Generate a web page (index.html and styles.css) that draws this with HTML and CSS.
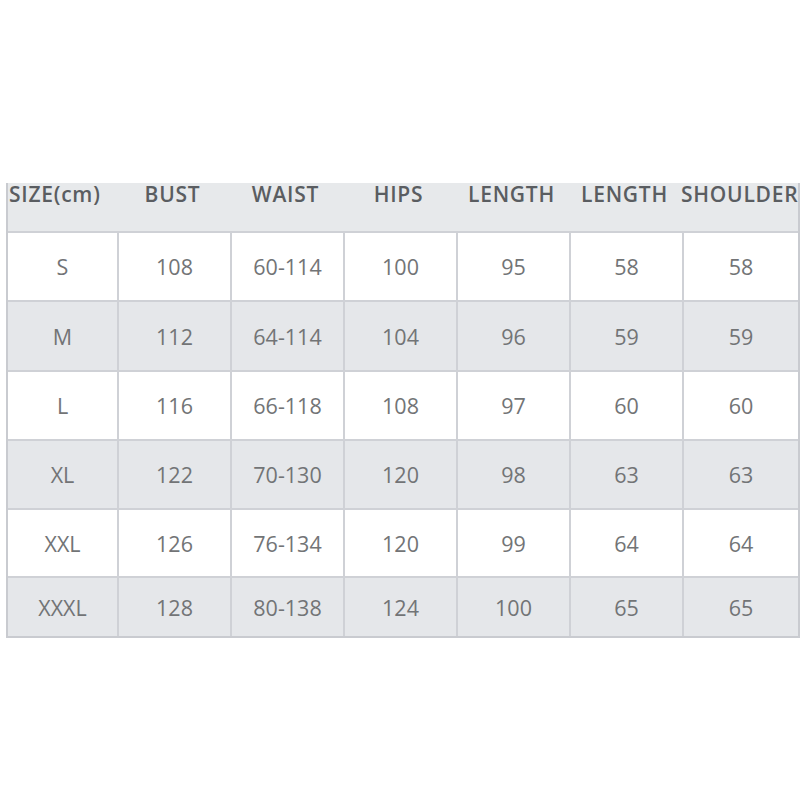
FILE: index.html
```html
<!DOCTYPE html>
<html>
<head>
<meta charset="utf-8">
<link rel="stylesheet" href="styles.css">
</head>
<body>
<div class="chart">
  <div class="head">
    <div class="hc first">SIZE(cm)</div>
    <div class="hc">BUST</div>
    <div class="hc">WAIST</div>
    <div class="hc">HIPS</div>
    <div class="hc">LENGTH</div>
    <div class="hc">LENGTH</div>
    <div class="hc last">SHOULDER</div>
  </div>
  <div class="row r1"><div>S</div><div>108</div><div>60-114</div><div>100</div><div>95</div><div>58</div><div>58</div></div>
  <div class="row alt r2"><div>M</div><div>112</div><div>64-114</div><div>104</div><div>96</div><div>59</div><div>59</div></div>
  <div class="row r3"><div>L</div><div>116</div><div>66-118</div><div>108</div><div>97</div><div>60</div><div>60</div></div>
  <div class="row alt r4"><div>XL</div><div>122</div><div>70-130</div><div>120</div><div>98</div><div>63</div><div>63</div></div>
  <div class="row r5"><div>XXL</div><div>126</div><div>76-134</div><div>120</div><div>99</div><div>64</div><div>64</div></div>
  <div class="row alt r6"><div>XXXL</div><div>128</div><div>80-138</div><div>124</div><div>100</div><div>65</div><div>65</div></div>
</div>
</body>
</html>
```
FILE: styles.css
```css
html, body {
  margin: 0;
  padding: 0;
  background: #ffffff;
}
body {
  width: 800px;
  height: 800px;
  overflow: hidden;
  font-family: "Open Sans", "Noto Sans", sans-serif;
}
.chart {
  margin-top: 183px;
  margin-left: 6px;
  width: 794px;
  border-left: 2px solid #c9cbd0;
  border-right: 2px solid #c9cbd0;
  border-bottom: 2px solid #c9cbd0;
  box-sizing: border-box;
}
.head {
  display: grid;
  grid-template-columns: 111px 113px 113px 113px 113px 113px 1fr;
  height: 48px;
  background: #e7e9eb;
  border-bottom: 2px solid #cfd1d6;
}
.hc {
  font-size: 21px;
  font-weight: 600;
  letter-spacing: 0.75px;
  color: #5a5d61;
  text-align: center;
  line-height: 22px;
  padding-right: 6px;
  white-space: nowrap;
}
.hc.first {
  text-align: left;
  padding-left: 1px;
  padding-right: 0;
}
.hc.last {
  padding-right: 0;
  margin-left: -3px;
}
.row {
  display: grid;
  grid-template-columns: 111px 113px 113px 113px 113px 113px 1fr;
  border-bottom: 2px solid #cfd1d6;
  background: #ffffff;
}
.row.alt {
  background: #e5e7ea;
}
.row:last-child {
  border-bottom: none;
}
.row > div {
  display: flex;
  align-items: center;
  justify-content: center;
  font-size: 21.5px;
  color: #727476;
  border-right: 2px solid #cfd1d6;
}
.row > div:last-child {
  border-right: none;
}
.r1, .r2, .r3, .r4 { height: 67px; }
.r2 { height: 68px; }
.r5 { height: 66px; }
.r6 { height: 58px; }
```
